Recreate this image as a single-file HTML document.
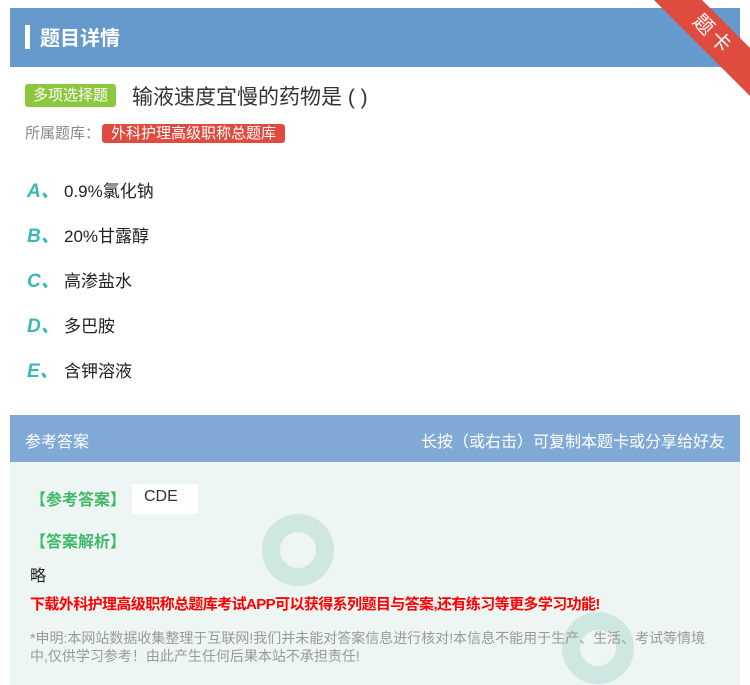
<!DOCTYPE html>
<html><head><meta charset="utf-8"><style>
*{margin:0;padding:0;box-sizing:border-box}
body{width:750px;height:685px;background:#fff;font-family:"Liberation Sans","Noto Sans CJK SC",sans-serif;position:relative;overflow:hidden}
.hdr{position:absolute;left:10px;top:8px;width:730px;height:59px;background:#6699cc}
.hdr .bar{position:absolute;left:15px;top:17px;width:5px;height:24px;background:#fff}
.hdr .t{position:absolute;left:30px;top:14px;color:#fff;font-size:20px;font-weight:bold}
.rib{position:absolute;right:-38px;top:18px;width:150px;height:34px;background:#e04b3f;transform:rotate(45deg);color:#fff;font-size:20px;text-align:center;line-height:34px;letter-spacing:4px}
.tag{position:absolute;left:25px;top:84px;background:#8dc63f;color:#fff;font-size:15px;padding:0 8px;height:23px;line-height:23px;border-radius:3px}
.q{position:absolute;left:132px;top:81px;font-size:21px;color:#333}
.lib{position:absolute;left:25px;top:122px;color:#888;font-size:15px}
.lib span{background:#e04b3f;color:#fff;border-radius:3px;padding:1px 9px;margin-left:2px}
.opt{position:absolute;left:27px;font-size:17px;color:#222}
.opt b{color:#3bb8b3;font-style:italic;font-size:19px;display:inline-block;width:37px}
.ah{position:absolute;left:10px;top:415px;width:730px;height:47px;background:#80aad5;color:#fff;font-size:16px}
.ah .l{position:absolute;left:15px;top:13px}
.ah .r{position:absolute;right:15px;top:13px}
.ab{position:absolute;left:10px;top:462px;width:730px;height:223px;background:#eef6f4}
.g{color:#3fb86a;font-size:16px;font-weight:bold;position:absolute}
.circ{position:absolute;border-radius:50%;border:18px solid #b9ddd3;opacity:.6}
</style></head><body>
<div class="hdr"><div class="bar"></div><div class="t">题目详情</div></div>
<div class="rib">题卡</div>
<div class="tag">多项选择题</div>
<div class="q">输液速度宜慢的药物是 ( )</div>
<div class="lib">所属题库：<span>外科护理高级职称总题库</span></div>
<div class="opt" style="top:176px"><b>A、</b>0.9%氯化钠</div>
<div class="opt" style="top:221px"><b>B、</b>20%甘露醇</div>
<div class="opt" style="top:266px"><b>C、</b>高渗盐水</div>
<div class="opt" style="top:311px"><b>D、</b>多巴胺</div>
<div class="opt" style="top:356px"><b>E、</b>含钾溶液</div>
<div class="ah"><span class="l">参考答案</span><span class="r">长按（或右击）可复制本题卡或分享给好友</span></div>
<div class="ab">
<div class="circ" style="left:252px;top:52px;width:72px;height:72px"></div>
<div class="circ" style="left:552px;top:150px;width:72px;height:72px"></div>
<div class="g" style="left:20px;top:24px">【参考答案】</div>
<div style="position:absolute;left:122px;top:22px;width:66px;height:30px;background:#fff;font-size:16px;color:#333;padding:4px 12px">CDE</div>
<div class="g" style="left:20px;top:66px">【答案解析】</div>
<div style="position:absolute;left:20px;top:100px;font-size:16px;color:#222">略</div>
<div style="position:absolute;left:20px;top:131px;font-size:15px;font-weight:bold;color:#f00;letter-spacing:-.6px">下载外科护理高级职称总题库考试APP可以获得系列题目与答案,还有练习等更多学习功能!</div>
<div style="position:absolute;left:20px;top:167px;width:690px;font-size:14px;color:#999;line-height:18px">*申明:本网站数据收集整理于互联网!我们并未能对答案信息进行核对!本信息不能用于生产、生活、考试等情境中,仅供学习参考！由此产生任何后果本站不承担责任!</div>
</div>
</body></html>
